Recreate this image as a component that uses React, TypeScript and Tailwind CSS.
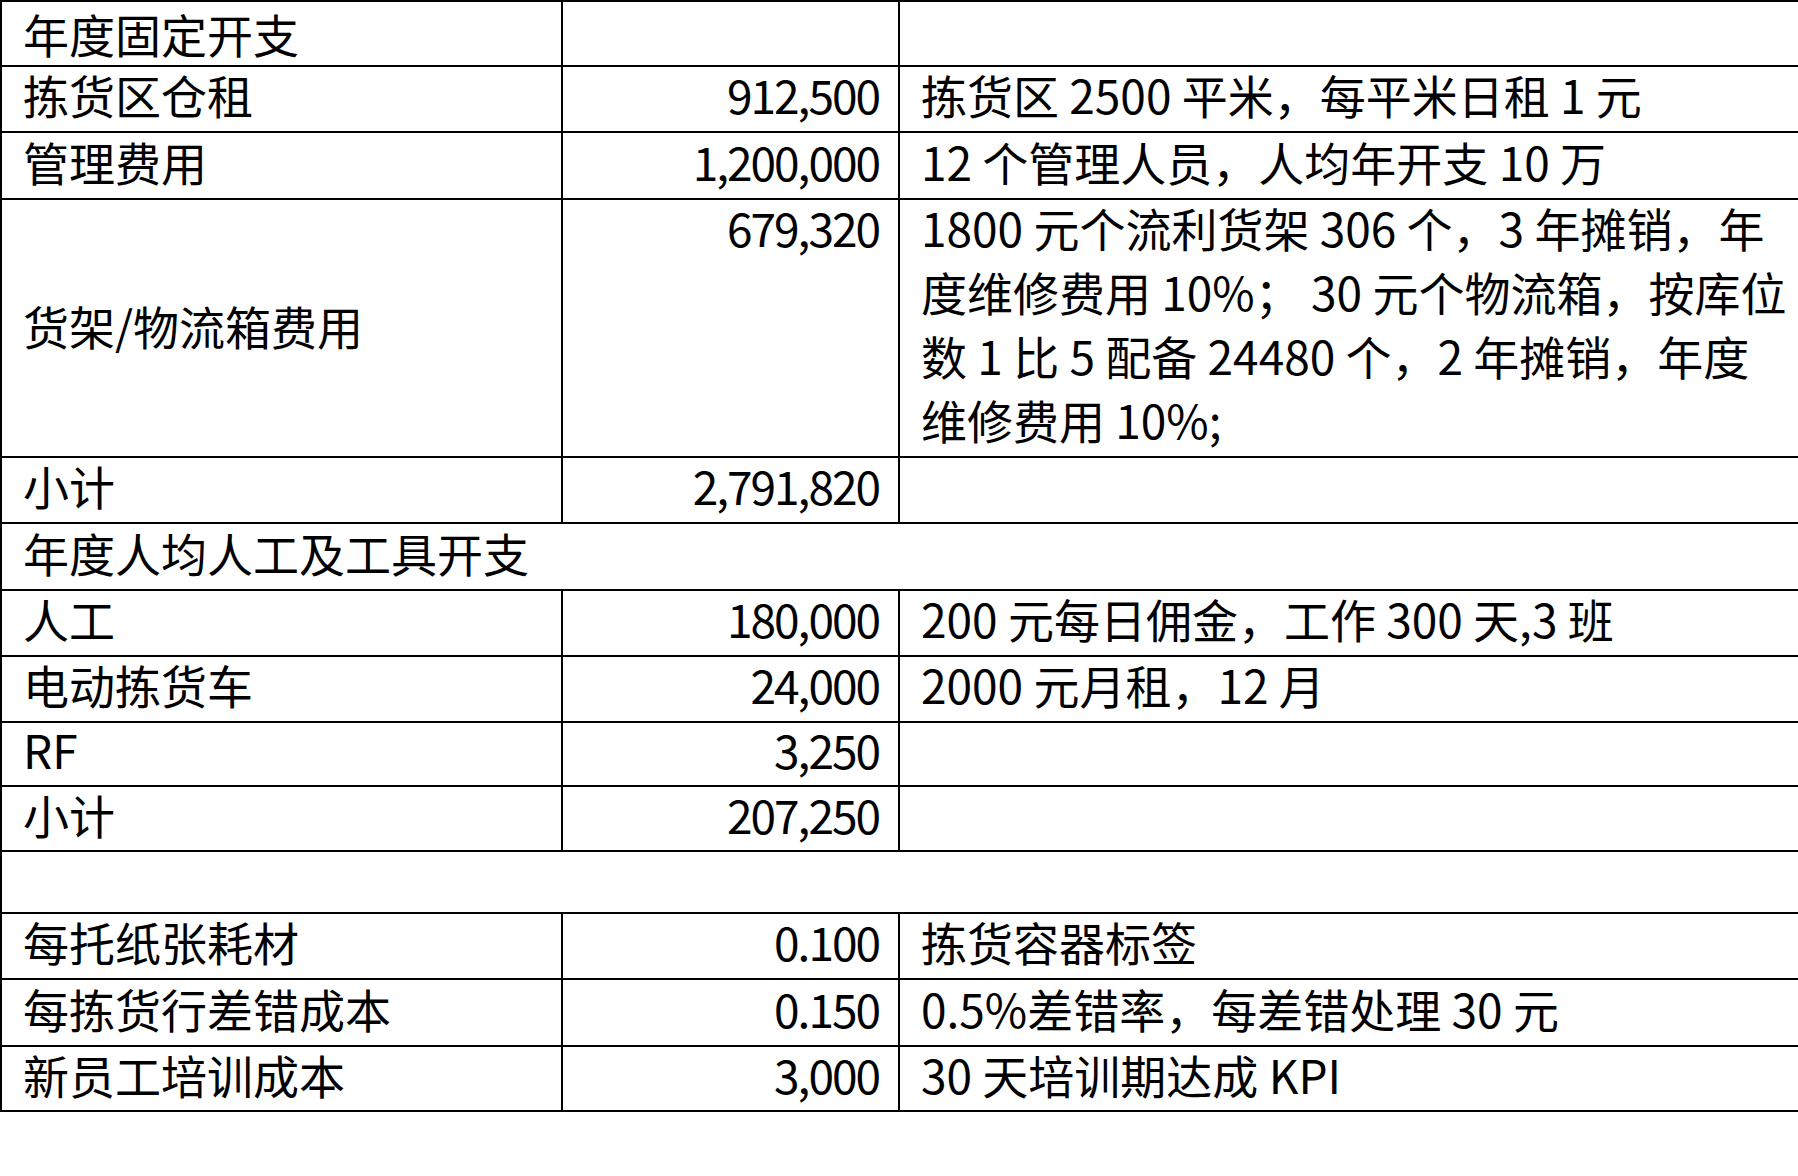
import React from "react";

type Row =
  | { kind: "full"; h: string; text: string }
  | { kind: "cells"; h: string; a: string; b: string; c: string; top?: boolean };

const rows: Row[] = [
  { kind: "cells", h: "h-[65px]", a: "年度固定开支", b: "", c: "", top: true },
  { kind: "cells", h: "h-[66px]", a: "拣货区仓租", b: "912,500", c: "拣货区 2500 平米，每平米日租 1 元" },
  { kind: "cells", h: "h-[67px]", a: "管理费用", b: "1,200,000", c: "12 个管理人员，人均年开支 10 万" },
];

const rowsB: Row[] = [
  { kind: "cells", h: "h-[66px]", a: "小计", b: "2,791,820", c: "" },
  { kind: "full", h: "h-[67px]", text: "年度人均人工及工具开支" },
  { kind: "cells", h: "h-[66px]", a: "人工", b: "180,000", c: "200 元每日佣金，工作 300 天,3 班" },
  { kind: "cells", h: "h-[66px]", a: "电动拣货车", b: "24,000", c: "2000 元月租，12 月" },
  { kind: "cells", h: "h-[64px]", a: "RF", b: "3,250", c: "" },
  { kind: "cells", h: "h-[65px]", a: "小计", b: "207,250", c: "" },
  { kind: "full", h: "h-[62px]", text: "" },
  { kind: "cells", h: "h-[66px]", a: "每托纸张耗材", b: "0.100", c: "拣货容器标签" },
  { kind: "cells", h: "h-[67px]", a: "每拣货行差错成本", b: "0.150", c: "0.5%差错率，每差错处理 30 元" },
  { kind: "cells", h: "h-[65px]", a: "新员工培训成本", b: "3,000", c: "30 天培训期达成 KPI" },
];

function RowView({ r }: { r: Row }) {
  if (r.kind === "full") {
    return (
      <div className={`${r.h} flex items-center border-b-2 border-black pl-[21px] pb-[10px] whitespace-nowrap`}>
        {r.text}
      </div>
    );
  }
  const pb = r.top ? "pb-[2px]" : "pb-[10px]";
  return (
    <div className={`${r.h} flex border-b-2 border-black`}>
      <div className={`w-[561px] shrink-0 border-r-2 border-black flex items-center pl-[21px] ${pb} whitespace-nowrap`}>
        {r.a}
      </div>
      <div className={`w-[337px] shrink-0 border-r-2 border-black flex items-center justify-end pr-[19px] ${pb} whitespace-nowrap tracking-[-2px]`}>
        {r.b}
      </div>
      <div className={`flex-1 min-w-0 flex items-center pl-[21px] ${pb} whitespace-nowrap`}>{r.c}</div>
    </div>
  );
}

export default function App() {
  return (
    <div className="w-[1798px] min-h-[1176px] bg-white font-['Noto_Sans_CJK_SC',sans-serif] text-[46px] text-black leading-none">
      <div className="w-full border-t-2 border-l-2 border-black">
        {rows.map((r, i) => (
          <RowView key={"a" + i} r={r} />
        ))}
        <div className="h-[258px] flex border-b-2 border-black">
          <div className="w-[561px] shrink-0 border-r-2 border-black flex items-center pl-[21px] pb-[6px] whitespace-nowrap">
            货架/物流箱费用
          </div>
          <div className="w-[337px] shrink-0 border-r-2 border-black flex items-start justify-end pr-[19px] -mt-[5px] whitespace-nowrap leading-[64px] tracking-[-2px]">
            679,320
          </div>
          <div className="flex-1 min-w-0 pl-[21px] -mt-[5px] whitespace-nowrap leading-[64px]">
            <div>1800 元个流利货架 306 个，3 年摊销，年</div>
            <div>度维修费用 10%； 30 元个物流箱，按库位</div>
            <div>数 1 比 5 配备 24480 个，2 年摊销，年度</div>
            <div>维修费用 10%;</div>
          </div>
        </div>
        {rowsB.map((r, i) => (
          <RowView key={"b" + i} r={r} />
        ))}
      </div>
    </div>
  );
}
